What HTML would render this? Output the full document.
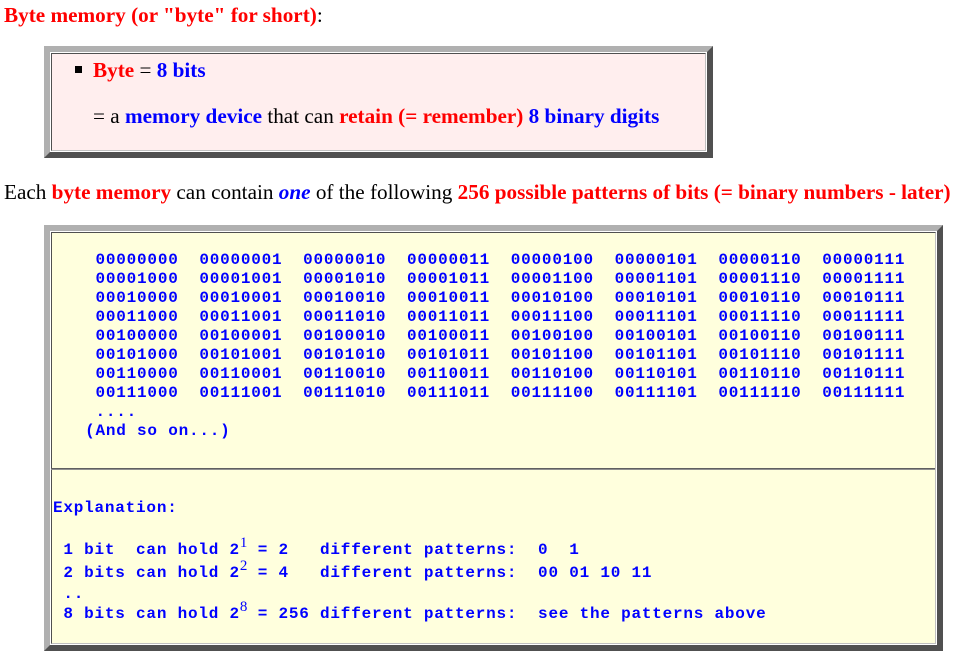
<!DOCTYPE html>
<html><head><meta charset="utf-8"><style>
body{margin:0;background:#fff;width:956px;height:653px;position:relative;overflow:hidden;font-family:"Liberation Serif",serif;font-size:21.2px;}
.a{position:absolute;white-space:nowrap;}
.r{color:#f00;font-weight:bold}.b{color:#00f;font-weight:bold}
.box{position:absolute;box-sizing:border-box;border:6px solid;border-color:#b0b0b0 #505050 #505050 #b0b0b0;}
.in{position:absolute;left:1px;top:1px;right:1px;bottom:1px;border:1px solid;border-color:#505050 #c0c0c0 #c0c0c0 #505050;}
pre{margin:0;position:absolute;font-family:"Liberation Mono",monospace;font-weight:bold;color:#00f;font-size:16px;letter-spacing:0.78px;line-height:19px;}
sup{font-family:"Liberation Serif",serif;font-weight:normal;font-size:15px;letter-spacing:0;vertical-align:7px;line-height:0}
</style></head><body>
<div class="a" style="left:4px;top:3px"><span class="r">Byte memory (or "byte" for short)</span>:</div>

<div class="box" style="left:44px;top:46px;width:669px;height:112px">
 <div class="in" style="background:#ffeeee"></div>
</div>
<div class="a" style="left:75px;top:66px;width:7px;height:7px;background:#000"></div>
<div class="a" style="left:93px;top:58px"><span class="r">Byte</span> = <span class="b">8 bits</span></div>
<div class="a" style="left:93px;top:104px">= a <span class="b">memory device</span> that can <span class="r">retain (= remember)</span> <span class="b">8 binary digits</span></div>

<div class="a" style="left:4px;top:180px">Each <span class="r">byte memory</span> can contain <i class="b">one</i> of the following <span class="r">256 possible patterns of bits (= binary numbers - later)</span></div>

<div class="box" style="left:44px;top:225px;width:899px;height:426px">
 <div class="in" style="background:#ffffdd"></div>
</div>
<div class="a" style="left:51px;top:468px;width:884px;height:1px;background:#606060"></div>
<div class="a" style="left:51px;top:469px;width:884px;height:1px;background:#909090"></div>

<pre style="left:54px;top:251px">    00000000  00000001  00000010  00000011  00000100  00000101  00000110  00000111
    00001000  00001001  00001010  00001011  00001100  00001101  00001110  00001111
    00010000  00010001  00010010  00010011  00010100  00010101  00010110  00010111
    00011000  00011001  00011010  00011011  00011100  00011101  00011110  00011111
    00100000  00100001  00100010  00100011  00100100  00100101  00100110  00100111
    00101000  00101001  00101010  00101011  00101100  00101101  00101110  00101111
    00110000  00110001  00110010  00110011  00110100  00110101  00110110  00110111
    00111000  00111001  00111010  00111011  00111100  00111101  00111110  00111111
    ....
   (And so on...)</pre>

<pre style="left:53px;top:499px">Explanation:</pre>
<pre style="left:53px;top:541px"> 1 bit  can hold 2<sup>1</sup> = 2   different patterns:  0  1</pre>
<pre style="left:53px;top:564px"> 2 bits can hold 2<sup>2</sup> = 4   different patterns:  00 01 10 11</pre>
<pre style="left:53px;top:585px"> ..</pre>
<pre style="left:53px;top:605px"> 8 bits can hold 2<sup>8</sup> = 256 different patterns:  see the patterns above</pre>
</body></html>
